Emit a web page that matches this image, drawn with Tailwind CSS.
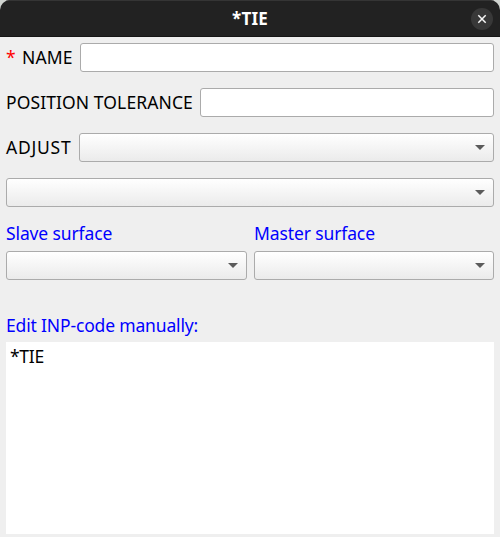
<!DOCTYPE html>
<html lang="en">
<head>
<meta charset="utf-8">
<title>*TIE</title>
<script src="https://cdn.jsdelivr.net/npm/@tailwindcss/browser@4"></script>
</head>
<body class="h-[537px] w-[500px] overflow-hidden bg-[#cfd3cf] font-['Noto_Sans',sans-serif] text-[17.5px] leading-[29px] text-black">
<div class="flex h-full flex-col overflow-hidden rounded-t-[10px] bg-[#efefef]">
  <header class="grid h-[37px] shrink-0 grid-cols-[1fr_auto_1fr] items-center border-t border-b border-t-[#353535] border-b-[#161616] bg-[#222222] pr-[7px]">
    <h1 class="col-start-2 pl-[7px] text-[17px] font-bold tracking-[0.2px] text-white">*TIE</h1>
    <button class="flex size-[22px] items-center justify-center justify-self-end rounded-full bg-[#383838]" aria-label="Close">
      <svg class="size-[22px]" viewBox="0 0 22 22" fill="none" stroke="#f7f7f7" stroke-width="1.5"><path d="M7.3 7.3L14.7 14.7M14.7 7.3L7.3 14.7"/></svg>
    </button>
  </header>
  <main class="flex flex-col px-[6px] pt-[6px]">
    <div class="flex h-[29px] whitespace-nowrap">
      <span class="w-[16px] shrink-0 text-[#ff0000]">*</span>
      <label class="w-[58px] shrink-0 tracking-[0.1px]">NAME</label>
      <input class="min-w-0 flex-1 rounded-[3px] border border-[#ababab] bg-white">
    </div>
    <div class="mt-4 flex h-[29px] whitespace-nowrap">
      <label class="w-[194px] shrink-0 tracking-[0.1px]">POSITION TOLERANCE</label>
      <input class="min-w-0 flex-1 rounded-[3px] border border-[#ababab] bg-white">
    </div>
    <div class="mt-4 flex h-[29px] whitespace-nowrap">
      <label class="w-[73px] shrink-0 tracking-[0.75px]">ADJUST</label>
      <div class="flex flex-1 items-center justify-end rounded-[3px] border border-[#ababab] bg-linear-to-b from-white to-[#ebebeb] pr-[8px]">
        <svg class="h-[5px] w-[10px]" viewBox="0 0 10 5" fill="#5b5b5b"><path d="M0 0H10L5 5Z"/></svg>
      </div>
    </div>
    <div class="mt-4 flex h-[29px] items-center justify-end rounded-[3px] border border-[#ababab] bg-linear-to-b from-white to-[#ebebeb] pr-[8px]">
      <svg class="h-[5px] w-[10px]" viewBox="0 0 10 5" fill="#5b5b5b"><path d="M0 0H10L5 5Z"/></svg>
    </div>
    <div class="mt-[12px] grid grid-cols-[241px_240px] gap-x-[7px] gap-y-[3px]">
      <label class="tracking-[-0.12px] text-[#0000ff]">Slave surface</label>
      <label class="tracking-[-0.12px] text-[#0000ff]">Master surface</label>
      <div class="flex h-[29px] items-center justify-end rounded-[3px] border border-[#ababab] bg-linear-to-b from-white to-[#ebebeb] pr-[8px]">
        <svg class="h-[5px] w-[10px]" viewBox="0 0 10 5" fill="#5b5b5b"><path d="M0 0H10L5 5Z"/></svg>
      </div>
      <div class="flex h-[29px] items-center justify-end rounded-[3px] border border-[#ababab] bg-linear-to-b from-white to-[#ebebeb] pr-[8px]">
        <svg class="h-[5px] w-[10px]" viewBox="0 0 10 5" fill="#5b5b5b"><path d="M0 0H10L5 5Z"/></svg>
      </div>
    </div>
    <label class="mt-[31px] h-[31px] tracking-[-0.16px] text-[#0000ff]">Edit INP-code manually:</label>
    <div class="h-[192px] bg-white pl-1 tracking-[-0.3px]">*TIE</div>
  </main>
</div>
</body>
</html>
